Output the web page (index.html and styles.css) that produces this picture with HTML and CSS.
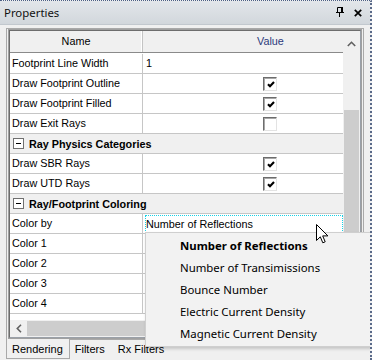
FILE: index.html
```html
<!DOCTYPE html>
<html>
<head>
<meta charset="utf-8">
<link rel="stylesheet" href="styles.css">
</head>
<body>
<div class="win">
  <div class="title">
    <span class="ttext">Properties</span>
    <div class="ticons">
      <svg class="pin" width="8" height="10" viewBox="0 0 8 10"><path d="M1.5 0.5H5.5V5.5M1.5 0.5V5.5" fill="none" stroke="#000" stroke-width="1"/><rect x="5" y="0" width="2" height="6" fill="#000"/><rect x="0" y="5" width="8" height="1" fill="#000"/><rect x="3" y="6" width="1" height="4" fill="#000"/></svg>
      <svg class="xic" width="8" height="8" viewBox="0 0 8 8"><path d="M0.8 0.8L7.2 7.2M7.2 0.8L0.8 7.2" stroke="#000" stroke-width="1.7"/></svg>
    </div>
  </div>
  <div class="page">
    <div class="grid">
      <div class="gridin">
        <div class="gmain">
          <div class="table">
            <div class="hdr">
              <div class="hname">Name</div>
              <div class="hval">Value</div>
            </div>
            <div class="tbody">
              <div class="row"><div class="name">Footprint Line Width</div><div class="val">1</div></div>
              <div class="row"><div class="name">Draw Footprint Outline</div><div class="val"><span class="cb"><svg width="8" height="7" viewBox="0 0 8 7"><path d="M1 3.2L3 5.3L7 1" fill="none" stroke="#000" stroke-width="2.1"/></svg></span></div></div>
              <div class="row"><div class="name">Draw Footprint Filled</div><div class="val"><span class="cb"><svg width="8" height="7" viewBox="0 0 8 7"><path d="M1 3.2L3 5.3L7 1" fill="none" stroke="#000" stroke-width="2.1"/></svg></span></div></div>
              <div class="row"><div class="name">Draw Exit Rays</div><div class="val"><span class="cb"></span></div></div>
              <div class="row cat"><span class="minus"></span><span class="ctext">Ray Physics Categories</span></div>
              <div class="row"><div class="name">Draw SBR Rays</div><div class="val"><span class="cb"><svg width="8" height="7" viewBox="0 0 8 7"><path d="M1 3.2L3 5.3L7 1" fill="none" stroke="#000" stroke-width="2.1"/></svg></span></div></div>
              <div class="row"><div class="name">Draw UTD Rays</div><div class="val"><span class="cb"><svg width="8" height="7" viewBox="0 0 8 7"><path d="M1 3.2L3 5.3L7 1" fill="none" stroke="#000" stroke-width="2.1"/></svg></span></div></div>
              <div class="row cat"><span class="minus"></span><span class="ctext">Ray/Footprint Coloring</span></div>
              <div class="row"><div class="name">Color by</div><div class="val focusval"><div class="focus">Number of Reflections</div></div></div>
              <div class="row"><div class="name">Color 1</div><div class="val"></div></div>
              <div class="row"><div class="name">Color 2</div><div class="val"></div></div>
              <div class="row"><div class="name">Color 3</div><div class="val"></div></div>
              <div class="row"><div class="name">Color 4</div><div class="val"></div></div>
              <div class="filler"></div>
            </div>
          </div>
          <div class="vscroll">
            <div class="vbtn"><svg width="9" height="6" viewBox="0 0 9 6"><path d="M0.8 5L4.5 1.3L8.2 5" fill="none" stroke="#606060" stroke-width="1.6"/></svg></div>
            <div class="vthumb"></div>
          </div>
        </div>
        <div class="hscroll">
          <div class="hbtn"><svg width="6" height="9" viewBox="0 0 6 9"><path d="M5 0.8L1.3 4.5L5 8.2" fill="none" stroke="#606060" stroke-width="1.6"/></svg></div>
          <div class="hthumb"></div>
        </div>
      </div>
    </div>
  </div>
  <div class="tabs">
    <div class="tab sel">Rendering</div>
    <div class="tab">Filters</div>
    <div class="tab">Rx Filters</div>
  </div>

  <div class="dropdown">
    <div class="item bold">Number of Reflections</div>
    <div class="item">Number of Transimissions</div>
    <div class="item">Bounce Number</div>
    <div class="item">Electric Current Density</div>
    <div class="item">Magnetic Current Density</div>
  </div>

  <svg class="cursor" width="13" height="21" viewBox="0 0 13 21"><path d="M0.5 0.5V16.5L4.3 12.8L6.8 18.8L9.2 17.8L6.7 11.9H11.9Z" fill="#fff" stroke="#000" stroke-width="1" stroke-linejoin="miter"/></svg>
</div>
</body>
</html>
```

FILE: styles.css
```css
* { box-sizing: border-box; }
html, body { margin: 0; padding: 0; }
body {
  background: #f0f0f0;
  font-family: "Liberation Sans", Arial, sans-serif;
  font-size: 10.8px;
  color: #000;
}
.win {
  width: 372px;
  height: 360px;
  position: relative;
  overflow: hidden;
  background: #f0f0f0;
  border-top: 1px dotted #4b5f84;
  border-right: 2px dotted #5a6a8a;
}
.title {
  height: 24px;
  display: flex;
  align-items: center;
  justify-content: space-between;
  padding: 0 8px 0 4px;
  background: linear-gradient(#e2e6ea, #d2d7dc);
  border-bottom: 1px solid #c2c8ce;
  font-family: "Noto Sans", "Open Sans", sans-serif;
  font-size: 11.4px;
  color: #111;
}
.ttext { margin-top: -1px; }
.ticons { display: flex; align-items: center; gap: 10px; }
.pin { display: block; margin-top: -1px; }
.xic { display: block; }

.page {
  margin: 3px 0 0 6px;
  width: 358px;
  height: 312px;
  border: 1px solid #a9a9a9;
  padding: 0 1px;
}
.grid {
  border: 1px solid #a0a0a0;
  width: 354px;
}
.gridin {
  border: 1px solid #6d6d6d;
  border-right-color: #9aa0a8;
  border-bottom-color: #9aa0a8;
}
.gmain { display: flex; }
.table { width: 333px; background: #fff; }
.hdr {
  display: flex;
  height: 22px;
  background: #f0f0f0;
  border-bottom: 1px solid #8a8a8a;
}
.hname {
  width: 133px;
  text-align: center;
  line-height: 21px;
  border-right: 1px solid #c4c4c4;
  box-shadow: inset -1px 0 0 #fff;
}
.hval {
  flex: 1;
  line-height: 21px;
  padding-left: 114px;
  color: #2b3a7c;
}
.tbody { padding-top: 1px; }
.row {
  display: flex;
  height: 20px;
  border-bottom: 1px solid #c6c6c6;
}
.name {
  width: 133px;
  padding-left: 2px;
  line-height: 19px;
  border-right: 1px solid #c6c6c6;
  white-space: nowrap;
}
.val {
  flex: 1;
  padding-left: 3px;
  line-height: 19px;
  display: flex;
  align-items: center;
}
.cb {
  width: 14px;
  height: 14px;
  margin-left: 117px;
  margin-top: 1px;
  background: #fff;
  border: 1px solid;
  border-color: #6d6d6d #e3e3e3 #e3e3e3 #6d6d6d;
  box-shadow: inset 1px 1px 0 #a8a8a8;
  display: flex;
  align-items: center;
  justify-content: center;
}
.cb svg { display: block; margin: 1px 0 0 1px; }
.row.cat {
  background: #f0f0f0;
  align-items: center;
  padding-left: 3px;
}
.minus {
  width: 11px;
  height: 11px;
  border: 1px solid #707070;
  background: #fff;
  position: relative;
}
.minus::after {
  content: "";
  position: absolute;
  left: 2px;
  top: 4px;
  width: 5px;
  height: 1px;
  background: #000;
}
.ctext {
  margin-left: 5px;
  font-weight: bold;
}
.focusval { padding: 0; align-items: stretch; }
.focus {
  flex: 1;
  margin: 1px 0 0 2px;
  border: 1px dotted #18d2e6;
  padding-left: 0;
  line-height: 16px;
}
.filler { height: 6px; }
.vscroll {
  width: 17px;
  background: #f0f0f0;
  display: flex;
  flex-direction: column;
}
.vbtn {
  height: 24px;
  display: flex;
  align-items: center;
  justify-content: center;
  padding-top: 1px;
}
.vbtn svg { display: block; }
.vthumb {
  margin: 55px 1px 0 1px;
  height: 170px;
  background: #cdcdcd;
}
.hscroll {
  display: flex;
  height: 17px;
  background: #f0f0f0;
}
.hbtn {
  width: 17px;
  display: flex;
  align-items: center;
  justify-content: center;
}
.hbtn svg { display: block; }
.hthumb {
  width: 260px;
  margin: 1px 0;
  background: #cdcdcd;
}

.tabs {
  display: flex;
  margin-left: 6px;
  height: 20px;
  font-size: 11px;
}
.tab {
  padding: 0 8px 0 5px;
  line-height: 19px;
  white-space: nowrap;
}
.tab.sel {
  margin-top: -1px;
  height: 20px;
  background: #f0f0f0;
  border: 1px solid #a9a9a9;
  border-top: 0;
  padding: 0 6px 0 5px;
  line-height: 20px;
}

.dropdown {
  position: absolute;
  left: 145px;
  top: 231px;
  width: 240px;
  height: 115px;
  background: #f2f2f2;
  border: 1px solid #cfcfcf;
  box-shadow: 1px 2px 3px rgba(0,0,0,0.18);
  padding: 2px 0 0 34px;
  font-family: "Noto Sans", "Open Sans", sans-serif;
  font-size: 11.4px;
  color: #000;
}
.item {
  height: 22px;
  line-height: 22px;
  white-space: nowrap;
}
.item.bold { font-weight: bold; }
.cursor {
  position: absolute;
  left: 316px;
  top: 223px;
}
```
